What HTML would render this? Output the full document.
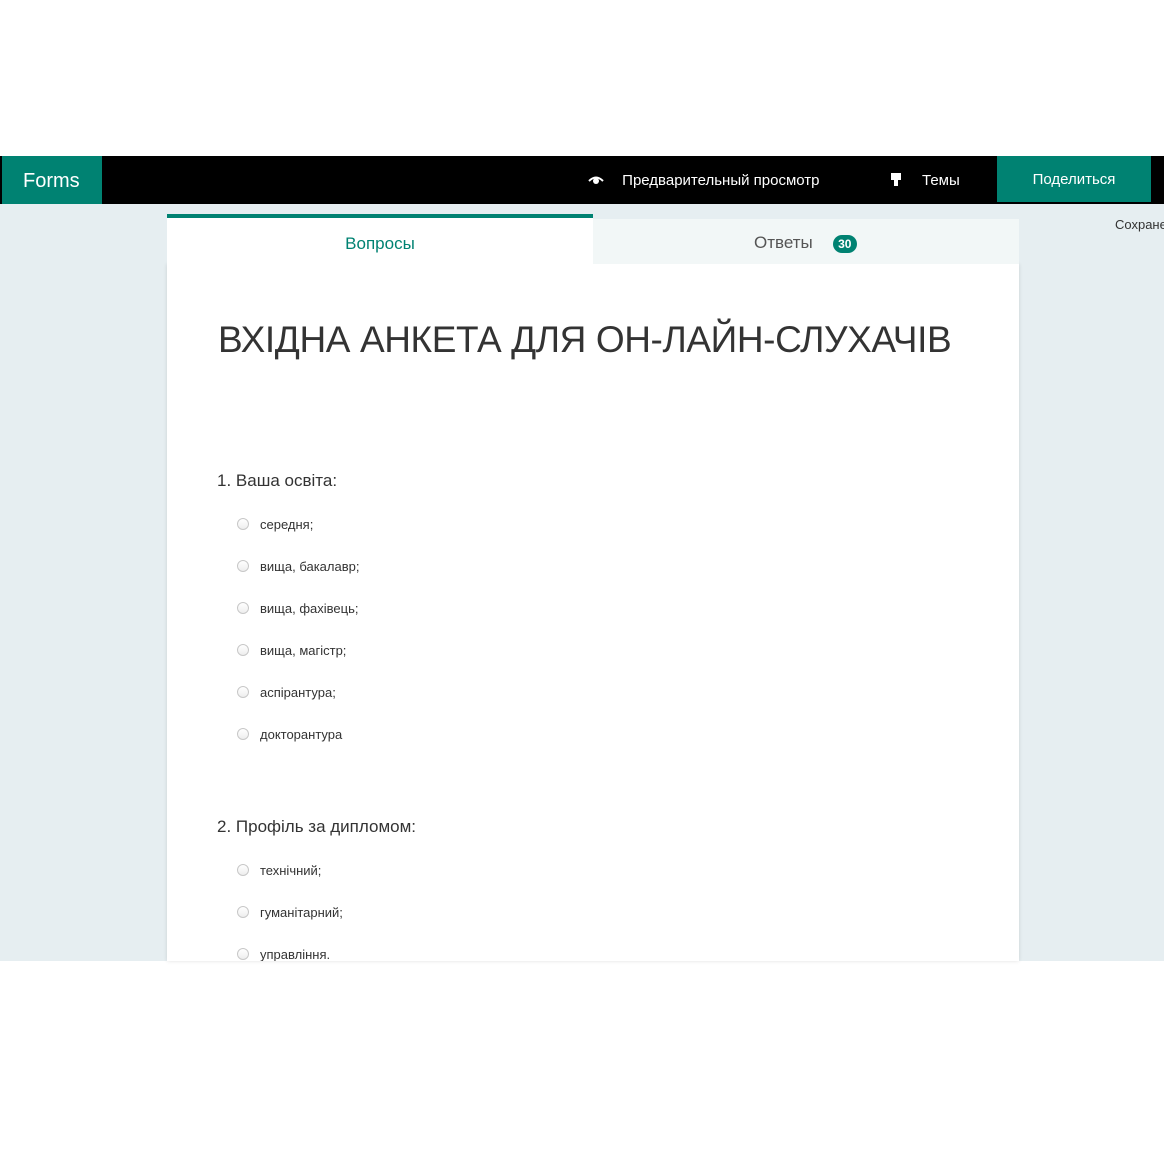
<!DOCTYPE html>
<html><head><meta charset="utf-8"><style>
*{margin:0;padding:0;box-sizing:border-box}
body{width:1164px;height:1168px;background:#fff;font-family:"Liberation Sans",sans-serif;position:relative;overflow:hidden}
.bar{position:absolute;top:156px;left:0;width:1164px;height:48px;background:#000}
.forms{position:absolute;top:156px;left:2px;width:100px;height:48px;background:#008272;color:#fff;font-size:20px;line-height:50px;padding-left:21px}
.nav{position:absolute;top:157px;height:48px;line-height:48px;color:#fff;font-size:15px}
.share{position:absolute;top:156px;left:997px;width:154px;height:46px;background:#008272;color:#fff;font-size:15px;line-height:48px;text-align:center}
.bg{position:absolute;top:204px;left:0;width:1164px;height:757px;background:#e6eef1}
.card{position:absolute;top:264px;left:167px;width:852px;height:697px;background:#fff;box-shadow:0 0 4px rgba(0,0,0,.12)}
.tab1{position:absolute;top:214px;left:167px;width:426px;height:50px;background:#fff;border-top:4px solid #008272;color:#008272;font-size:17px;text-align:center;line-height:52px}
.tab2{position:absolute;top:219px;left:593px;width:426px;height:45px;background:#f2f7f7;color:#555;font-size:17px;line-height:48px;padding-left:161px}
.badge{display:inline-block;width:24px;height:18px;border-radius:9px;background:#008272;color:#fff;font-size:12px;font-weight:bold;line-height:18px;text-align:center;margin-left:20px;vertical-align:middle}
.save{position:absolute;top:217px;left:1115px;font-size:13px;color:#333}
.title{position:absolute;top:319px;left:218px;font-size:37px;color:#333;white-space:nowrap;letter-spacing:-0.4px}
.q{position:absolute;left:217px;font-size:17px;color:#333}
.o{position:absolute;left:237px;font-size:13px;color:#333}
.o i{display:inline-block;width:12px;height:12px;border:1px solid #c8c8c8;border-radius:50%;background:linear-gradient(#fff,#eee);vertical-align:-1px;margin-right:11px}
</style></head><body>
<div class="bar"></div>
<div class="forms">Forms</div>
<div class="nav" style="left:588px">
<svg width="16" height="12" viewBox="0 0 16 12" style="vertical-align:-1px"><path d="M1 7 Q8 0 15 7" stroke="#fff" stroke-width="2" fill="none"/><circle cx="8" cy="7" r="3" fill="#fff"/></svg>
<span style="margin-left:14px">Предварительный просмотр</span></div>
<div class="nav" style="left:890px"><svg width="12" height="15" viewBox="0 0 12 15" style="vertical-align:-2px"><rect x="1" y="1" width="10" height="7" fill="#fff"/><rect x="4" y="8" width="4" height="6" fill="#fff"/></svg><span style="margin-left:20px">Темы</span></div>
<div class="share">Поделиться</div>
<div class="bg"></div>
<div class="save">Сохранено</div>
<div class="card"></div>
<div class="tab1">Вопросы</div>
<div class="tab2">Ответы<span class="badge">30</span></div>
<div class="title">ВХІДНА АНКЕТА ДЛЯ ОН-ЛАЙН-СЛУХАЧІВ</div>
<div class="q" style="top:471px">1. Ваша освіта:</div>
<div class="o" style="top:517px"><i></i>середня;</div>
<div class="o" style="top:559px"><i></i>вища, бакалавр;</div>
<div class="o" style="top:601px"><i></i>вища, фахівець;</div>
<div class="o" style="top:643px"><i></i>вища, магістр;</div>
<div class="o" style="top:685px"><i></i>аспірантура;</div>
<div class="o" style="top:727px"><i></i>докторантура</div>
<div class="q" style="top:817px">2. Профіль за дипломом:</div>
<div class="o" style="top:863px"><i></i>технічний;</div>
<div class="o" style="top:905px"><i></i>гуманітарний;</div>
<div class="o" style="top:947px;height:14px;overflow:hidden"><i></i>управління.</div>
</body></html>
